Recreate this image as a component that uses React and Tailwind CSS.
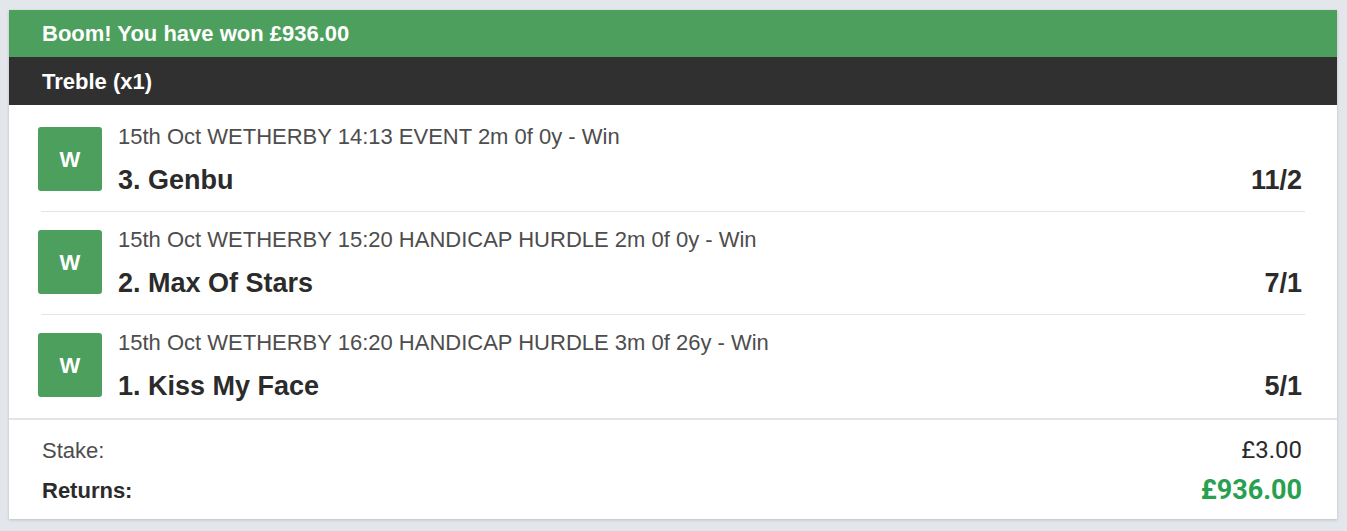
const legs = [
  { meta: '15th Oct WETHERBY 14:13 EVENT 2m 0f 0y - Win', name: '3. Genbu', odds: '11/2' },
  { meta: '15th Oct WETHERBY 15:20 HANDICAP HURDLE 2m 0f 0y - Win', name: '2. Max Of Stars', odds: '7/1' },
  { meta: '15th Oct WETHERBY 16:20 HANDICAP HURDLE 3m 0f 26y - Win', name: '1. Kiss My Face', odds: '5/1' },
]

function Leg({ leg, last }) {
  return (
    <div className={`pt-[18px] ${last ? 'pb-[21px]' : 'pb-[20px] border-b border-[#e1e4e8]'}`}>
      <div className="-ml-[3px] flex h-16 gap-4 pr-[3px]">
        <div className="flex h-16 w-16 shrink-0 items-center justify-center rounded-[3px] bg-[#4c9f5c] text-[22px] font-bold text-white">
          W
        </div>
        <div className="flex min-w-0 flex-1 flex-col">
          <div className="text-[22px] leading-[20px] text-[#4d4d4d]">{leg.meta}</div>
          <div className="mt-[22px] flex items-center justify-between text-[27px] font-bold leading-[22px] text-[#2b2b2b]">
            <span>{leg.name}</span>
            <span>{leg.odds}</span>
          </div>
        </div>
      </div>
    </div>
  )
}

export default function App() {
  return (
    <div className="min-h-[531px] bg-[#e3e6ea] pt-[10px] pl-[9px] pr-[10px] font-['Liberation_Sans']">
      <div className="bg-white shadow-[0_1px_3px_rgba(0,0,0,0.18)]">
        <div className="flex h-[47px] items-center bg-[#4c9f5c] px-[33px] text-[22px] font-bold text-white">
          Boom! You have won £936.00
        </div>
        <div className="flex h-[48px] items-center bg-[#303030] px-[33px] text-[22px] font-bold text-white">
          Treble (x1)
        </div>
        <div className="px-[32px] pt-[4px]">
          {legs.map((leg, i) => (
            <Leg key={leg.name} leg={leg} last={i === legs.length - 1} />
          ))}
        </div>
        <div className="border-t-2 border-[#e1e4e8] pt-[15px] pb-[14px] pl-[33px] pr-[35px]">
          <div className="flex h-[30px] items-center justify-between">
            <span className="text-[22px] text-[#4d4d4d]">Stake:</span>
            <span className="font-['Roboto'] text-[24px] text-[#2b2b2b]">£3.00</span>
          </div>
          <div className="mt-[10px] flex h-[30px] items-center justify-between">
            <span className="text-[22px] font-bold text-[#2b2b2b]">Returns:</span>
            <span className="font-['Roboto'] text-[27px] font-bold text-[#27a04f]">£936.00</span>
          </div>
        </div>
      </div>
    </div>
  )
}
